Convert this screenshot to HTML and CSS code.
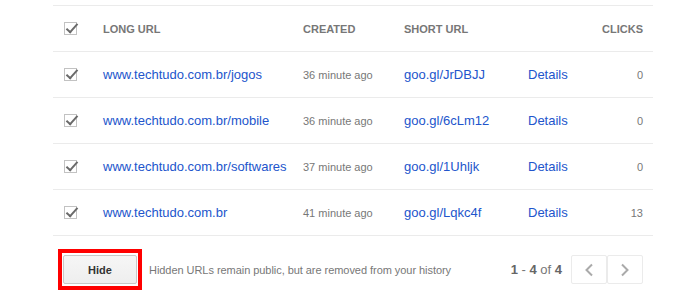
FILE: index.html
```html
<!DOCTYPE html>
<html lang="en">
<head>
  <meta charset="UTF-8" />
  <title>URL History</title>
  <link rel="stylesheet" href="styles.css">
</head>
<body>
  <div class="history">
    <div class="row head">
      <span class="check"></span>
      <span>Long URL</span>
      <span>Created</span>
      <span>Short URL</span>
      <span></span>
      <span class="clicks">Clicks</span>
    </div>
    <div class="row">
      <span class="check"></span>
      <a class="long" href="#">www.techtudo.com.br/jogos</a>
      <span class="created">36 minute ago</span>
      <a class="short" href="#">goo.gl/JrDBJJ</a>
      <a class="details" href="#">Details</a>
      <span class="clicks">0</span>
    </div>
    <div class="row">
      <span class="check"></span>
      <a class="long" href="#">www.techtudo.com.br/mobile</a>
      <span class="created">36 minute ago</span>
      <a class="short" href="#">goo.gl/6cLm12</a>
      <a class="details" href="#">Details</a>
      <span class="clicks">0</span>
    </div>
    <div class="row">
      <span class="check"></span>
      <a class="long" href="#">www.techtudo.com.br/softwares</a>
      <span class="created">37 minute ago</span>
      <a class="short" href="#">goo.gl/1Uhljk</a>
      <a class="details" href="#">Details</a>
      <span class="clicks">0</span>
    </div>
    <div class="row">
      <span class="check"></span>
      <a class="long" href="#">www.techtudo.com.br</a>
      <span class="created">41 minute ago</span>
      <a class="short" href="#">goo.gl/Lqkc4f</a>
      <a class="details" href="#">Details</a>
      <span class="clicks">13</span>
    </div>

    <div class="footer">
      <span class="highlight"><button class="hide-btn">Hide</button></span>
      <span class="note">Hidden URLs remain public, but are removed from your history</span>
      <span class="count"><b>1</b> - <b>4</b> of <b>4</b></span>
      <div class="pager">
        <button class="page-btn">
          <svg width="10" height="14" viewBox="0 0 10 14"><path d="M8 1.5 L2.5 7 L8 12.5" fill="none" stroke="#aaa" stroke-width="2"/></svg>
        </button>
        <button class="page-btn">
          <svg width="10" height="14" viewBox="0 0 10 14"><path d="M2 1.5 L7.5 7 L2 12.5" fill="none" stroke="#aaa" stroke-width="2"/></svg>
        </button>
      </div>
    </div>
  </div>
</body>
</html>
```

FILE: styles.css
```css
* {
  box-sizing: border-box;
}

body {
  margin: 0;
  background: #fff;
  font-family: "Liberation Sans", Arial, sans-serif;
}

.history {
  width: 600px;
  margin: 5px 0 0 53px;
  border-top: 1px solid #ebebeb;
}

.row {
  display: grid;
  grid-template-columns: 50px 200px 101px 124px 60px 1fr;
  align-items: center;
  height: 46px;
  padding-right: 10px;
  border-bottom: 1px solid #ebebeb;
}

.row.head span {
  font-size: 11px;
  font-weight: bold;
  color: #777;
  text-transform: uppercase;
}

.check {
  width: 13px;
  height: 13px;
  margin-left: 11px;
  border: 1px solid #c2c2c2;
  background: #fff;
  position: relative;
}

.check::after {
  content: '';
  position: absolute;
  left: 4px;
  top: -2px;
  width: 4px;
  height: 10px;
  border: solid #6a6a6a;
  border-width: 0 2px 2px 0;
  transform: rotate(42deg);
}

a {
  color: #2255cc;
  text-decoration: none;
  font-size: 13px;
}

.created {
  font-size: 11px;
  color: #777;
}

.clicks {
  text-align: right;
  font-size: 11px;
  color: #777;
}

.footer {
  display: flex;
  align-items: center;
  padding: 13px 10px 0 5px;
}

.highlight {
  border: 4px solid #ff0000;
  padding: 2px 1px;
  display: inline-flex;
}

.hide-btn {
  width: 74px;
  height: 29px;
  border: 1px solid #c8c8c8;
  border-radius: 2px;
  background: linear-gradient(#f6f6f6, #eeeeee);
  font-family: "Liberation Sans", Arial, sans-serif;
  font-size: 11px;
  font-weight: bold;
  color: #333;
}

.note {
  margin-left: 7px;
  font-size: 11px;
  color: #777;
  letter-spacing: -0.05px;
}

.count {
  margin-left: auto;
  font-size: 13px;
  color: #777;
}

.count b {
  color: #666;
}

.pager {
  display: flex;
  margin-left: 9px;
}

.page-btn {
  width: 36px;
  height: 29px;
  border: 1px solid #ebebeb;
  border-radius: 2px;
  background: #fff;
  display: flex;
  align-items: center;
  justify-content: center;
  padding: 0;
}
```
